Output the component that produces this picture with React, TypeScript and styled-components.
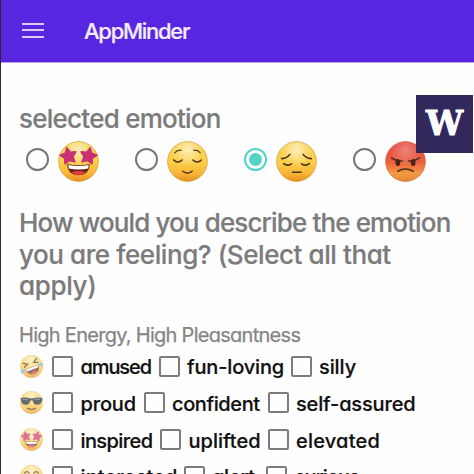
import React from 'react';
import styled, { createGlobalStyle } from 'styled-components';

const GlobalStyle = createGlobalStyle`
  * { box-sizing: border-box; }
  body {
    margin: 0;
    background: #fff;
    font-family: Inter, 'Open Sans', sans-serif;
    font-feature-settings: 'cv11';
  }
`;

const Screen = styled.div`
  position: relative;
  width: 474px;
  height: 474px;
  overflow: hidden;
  background: #fefefe;
  border-left: 1px solid #2c2a30;
`;

const AppBar = styled.header`
  display: flex;
  align-items: center;
  height: 63px;
  padding-left: 21px;
  background: #5826e0;
  border-bottom: 1px solid #b9a3ea;
`;

const MenuButton = styled.button`
  display: flex;
  flex-direction: column;
  gap: 4.5px;
  width: 22px;
  margin-top: -2px;
  padding: 0;
  border: 0;
  background: none;
`;

const MenuBar = styled.span`
  height: 2px;
  background: #dccbf7;
`;

const AppTitle = styled.h1`
  margin: 0 0 0 40px;
  color: #f3ecfd;
  font-size: 22px;
  font-weight: 500;
  line-height: 28px;
  letter-spacing: -1.28px;
  -webkit-text-stroke: 0.2px #f3ecfd;
`;

const Content = styled.main`
  padding: 40px 0 0 18px;
`;

const Heading = styled.h2`
  margin: 0;
  color: #7b7b7b;
  font-size: 26px;
  font-weight: 500;
  line-height: 32px;
  letter-spacing: -0.76px;
  -webkit-text-stroke: 0.2px #7b7b7b;
`;

const Emotions = styled.div`
  display: grid;
  grid-template-columns: repeat(4, 109px);
  height: 72px;
  padding: 6px 0 0 7px;
`;

const Emotion = styled.label`
  display: flex;
  align-items: flex-start;
  gap: 8.5px;
`;

const Radio = styled.span<{ $on?: boolean }>`
  display: grid;
  place-items: center;
  width: 23px;
  height: 23px;
  margin-top: 7px;
  border: 2px solid ${(p) => (p.$on ? '#53d3c6' : '#777')};
  border-radius: 50%;

  &::after {
    content: '';
    width: 13px;
    height: 13px;
    border-radius: 50%;
    background: ${(p) => (p.$on ? '#53d3c6' : 'transparent')};
  }
`;

const Question = styled.div`
  color: #7b7b7b;
  font-size: 26px;
  font-weight: 500;
  line-height: 31.6px;
  white-space: nowrap;
  -webkit-text-stroke: 0.2px #7b7b7b;
`;

const QuestionLine = styled.div<{ $track: number }>`
  letter-spacing: ${(p) => p.$track}px;
`;

const GroupTitle = styled.h3`
  margin: 21px 0 1px;
  color: #858585;
  font-size: 20px;
  font-weight: 400;
  line-height: 24px;
  letter-spacing: -0.72px;
  white-space: nowrap;
  -webkit-text-stroke: 0.25px #858585;
`;

const Row = styled.div`
  display: flex;
  align-items: center;
  height: 36.7px;
  padding-left: 1px;
`;

const RowFace = styled.span`
  display: flex;
  width: 32px;
  opacity: 0.68;
`;

const Option = styled.label<{ $slot: number }>`
  display: flex;
  flex: none;
  align-items: center;
  gap: 7.5px;
  width: ${(p) => p.$slot}px;
`;

const Checkbox = styled.span`
  flex: none;
  width: 21px;
  height: 21px;
  border: 2px solid #7c7c7c;
  border-radius: 2px;
`;

const OptionText = styled.span<{ $track: number }>`
  padding-top: 2px;
  color: #101010;
  font-size: 20px;
  font-weight: 500;
  line-height: 24px;
  letter-spacing: ${(p) => p.$track}px;
  white-space: nowrap;
  -webkit-text-stroke: 0.2px #101010;
`;

const Badge = styled.div`
  position: absolute;
  top: 95px;
  right: 1px;
  display: grid;
  place-items: center;
  width: 57px;
  height: 58px;
  background: #33285c;
  color: #fff;
  font: bold 33px/58px 'DejaVu Serif', serif;
  -webkit-text-stroke: 1px #fff;
`;

type FaceKind = 'stars' | 'calm' | 'sad' | 'angry' | 'rofl' | 'cool' | 'smile';

const Star = ({ x, tilt }: { x: number; tilt: number }) => (
  <path
    transform={`translate(${x} 14.3) rotate(${tilt})`}
    d="M0-8 2.5-2.9 8-2.2 4.1 1.8 5 7.3 0 4.8-5 7.3-4.1 1.8-8-2.2-2.5-2.9Z"
    fill="#c92f75"
    stroke="#c92f75"
    strokeWidth="1.4"
    strokeLinejoin="round"
  />
);

const Face = ({ kind, size }: { kind: FaceKind; size: number }) => {
  const id = `skin-${kind}-${size}`;
  const angry = kind === 'angry';
  const line = { fill: 'none', stroke: '#4b3218', strokeWidth: 1.5, strokeLinecap: 'round' as const };
  return (
    <svg width={size} height={size} viewBox="0 0 40 40">
      <defs>
        <linearGradient id={id} x1="0" y1="0" x2="0" y2="1">
          <stop offset="0" stopColor={angry ? '#e2463f' : '#f8cf4b'} />
          <stop offset="0.5" stopColor={angry ? '#ea5d40' : '#fccf4a'} />
          <stop offset="0.8" stopColor={angry ? '#f49a42' : '#f8b535'} />
          <stop offset="1" stopColor={angry ? '#e58a30' : '#e58f22'} />
        </linearGradient>
        <radialGradient id={`${id}-shine`} cx="0.5" cy="0.2" r="0.42">
          <stop offset="0" stopColor="#fff" stopOpacity={angry ? 0.3 : 0.62} />
          <stop offset="1" stopColor="#fff" stopOpacity="0" />
        </radialGradient>
      </defs>
      <circle cx="20" cy="20" r="19.4" fill={`url(#${id})`} stroke={angry ? '#d9603c' : '#d99a35'} strokeWidth="0.7" />
      <circle cx="20" cy="20" r="19" fill={`url(#${id}-shine)`} />
      {kind === 'stars' && (
        <>
          <path d="M9 22.5Q20 25 31 22.5C31 29 27 33.5 20 33.5S9 29 9 22.5Z" fill="#6b2419" />
          <path d="M10 23.4Q20 25.6 30 23.4L29.4 26.8Q20 28.6 10.6 26.8Z" fill="#fff" />
          <path d="M13 30.7Q20 27.8 27 30.7 24.5 33.3 20 33.3T13 30.7Z" fill="#df3f42" />
          <Star x={10.2} tilt={-12} />
          <Star x={29.8} tilt={12} />
        </>
      )}
      {kind === 'calm' && (
        <g {...line}>
          <path d="M7.5 11.5Q10 8.5 14 9M26 9Q30 8.5 32.5 11.5" strokeWidth="1.1" />
          <path d="M6.5 18.5Q10.5 22.5 14.8 18.5M25.2 18.5Q29.5 22.5 33.5 18.5" />
          <path d="M15.5 29.5Q20 33 24.5 29.5" />
        </g>
      )}
      {kind === 'sad' && (
        <g {...line}>
          <path d="M5.5 17.2Q11 16.8 13.5 13M26.5 13Q29 16.8 34.5 17.2" />
          <path d="M7.5 22Q11 25 15 22.2M25 22.2Q29 25 32.5 22" />
          <path d="M16 30.5H24.5" />
        </g>
      )}
      {angry && (
        <>
          <path d="M6.5 16.4Q11 19.8 17 19.6M33.5 16.4Q29 19.8 23 19.6" {...line} />
          <ellipse cx="12.5" cy="21" rx="2.3" ry="3.5" fill="#482616" />
          <ellipse cx="27.5" cy="21" rx="2.3" ry="3.5" fill="#482616" />
          <path d="M12.5 29.5Q20 25 27.5 29.5" {...line} />
        </>
      )}
      {kind === 'rofl' && (
        <g transform="rotate(-20 20 20)">
          <path d="M8 21H33C32 30 27 34 20.5 34S9 30 8 21Z" fill="#6b3026" />
          <path d="M9 21.5H32L31 25.5H10Z" fill="#fff" />
          <path d="M14 31Q20 27 27 31 24 34 20 34T14 31Z" fill="#dd4a45" />
          <path d="M8 10 15 14 8 17M33 10 26 14 33 17" {...line} strokeWidth="2.2" />
          <path d="M8 20Q-2 19-1 25 3 29 8 20ZM33 20Q43 19 41 25 37 29 33 20Z" fill="#62b6ea" />
        </g>
      )}
      {kind === 'cool' && (
        <>
          <path
            d="M1 12Q10 10.5 17 12.5 20 13.5 23 12.5 30 10.5 39 12L38.5 16C37 22 34.5 24 30 24 25 24 23 21 22 16.5H18C17 21 15 24 10 24 5.5 24 3 22 1.5 16Z"
            fill="#22272c"
          />
          <path d="M5 15Q9 13.5 14 15.5M26 15Q31 13.5 35 15" fill="none" stroke="#77828a" strokeWidth="1.6" />
          <path d="M13 30Q20 34 27 30" {...line} strokeWidth="2" />
        </>
      )}
      {kind === 'smile' && (
        <g {...line} strokeWidth="2">
          <path d="M8 14Q12 9 16 14M24 14Q28 9 32 14" />
          <path d="M10 25Q20 34 30 25" />
        </g>
      )}
    </svg>
  );
};

const emotions: { kind: FaceKind; on?: boolean }[] = [
  { kind: 'stars' },
  { kind: 'calm' },
  { kind: 'sad', on: true },
  { kind: 'angry' },
];

type OptionData = { text: string; slot: number; track: number };

const rows: { face: FaceKind; options: OptionData[] }[] = [
  {
    face: 'rofl',
    options: [
      { text: 'amused', slot: 106.5, track: -1.1 },
      { text: 'fun-loving', slot: 132, track: -0.15 },
      { text: 'silly', slot: 80, track: -0.1 },
    ],
  },
  {
    face: 'cool',
    options: [
      { text: 'proud', slot: 91.5, track: -0.15 },
      { text: 'confident', slot: 124, track: -0.4 },
      { text: 'self-assured', slot: 160, track: -0.15 },
    ],
  },
  {
    face: 'stars',
    options: [
      { text: 'inspired', slot: 108, track: -0.6 },
      { text: 'uplifted', slot: 107.5, track: 0 },
      { text: 'elevated', slot: 130, track: 0.2 },
    ],
  },
  {
    face: 'smile',
    options: [
      { text: 'interested', slot: 131.5, track: 0.1 },
      { text: 'alert', slot: 82, track: -0.25 },
      { text: 'curious', slot: 110, track: -0.93 },
    ],
  },
];

export default function App() {
  return (
    <>
      <GlobalStyle />
      <Screen>
        <AppBar>
          <MenuButton aria-label="Menu">
            <MenuBar />
            <MenuBar />
            <MenuBar />
          </MenuButton>
          <AppTitle>AppMinder</AppTitle>
        </AppBar>
        <Content>
          <Heading>selected emotion</Heading>
          <Emotions>
            {emotions.map((e) => (
              <Emotion key={e.kind}>
                <Radio $on={e.on} />
                <Face kind={e.kind} size={41} />
              </Emotion>
            ))}
          </Emotions>
          <Question>
            <QuestionLine $track={-0.87}>How would you describe the emotion</QuestionLine>
            <QuestionLine $track={-0.42}>you are feeling? (Select all that</QuestionLine>
            <QuestionLine $track={-0.35}>apply)</QuestionLine>
          </Question>
          <GroupTitle>High Energy, High Pleasantness</GroupTitle>
          {rows.map((row) => (
            <Row key={row.face}>
              <RowFace>
                <Face kind={row.face} size={23} />
              </RowFace>
              {row.options.map((o) => (
                <Option key={o.text} $slot={o.slot}>
                  <Checkbox />
                  <OptionText $track={o.track}>{o.text}</OptionText>
                </Option>
              ))}
            </Row>
          ))}
        </Content>
        <Badge>W</Badge>
      </Screen>
    </>
  );
}
